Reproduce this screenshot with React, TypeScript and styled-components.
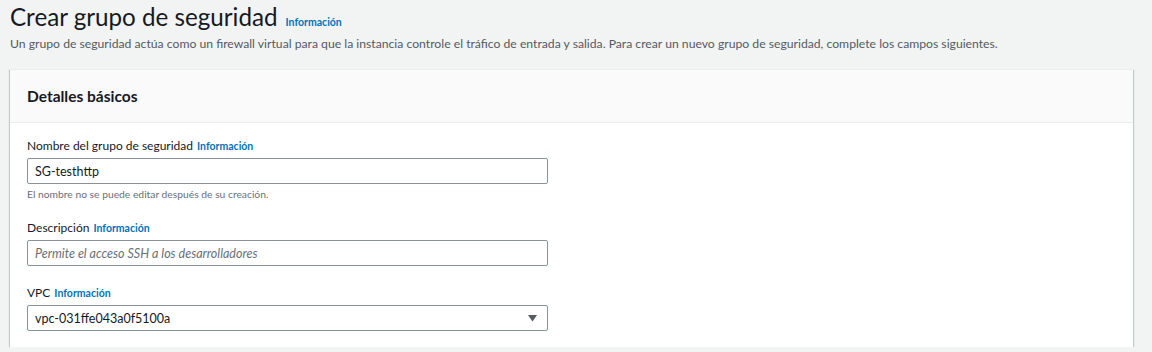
import React, { FC } from 'react'
import styled, { createGlobalStyle } from 'styled-components'

const GlobalStyle = createGlobalStyle`
  body {
    margin: 0;
    background: #f2f3f3;
    font-family: Lato, "Open Sans", "Liberation Sans", Arial, sans-serif;
    color: #16191f;
  }
`

const Page = styled.main`
  padding: 0 19px 0 10px;
`

const TitleRow = styled.div`
  display: flex;
  align-items: baseline;
  gap: 8px;
  height: 34px;
`

const Title = styled.h1`
  margin: 0;
  font-size: 24.2px;
  font-weight: 400;
  line-height: 34px;
  color: #16191f;
`

const InfoLink = styled.a`
  font-size: 10.5px;
  font-weight: 700;
  color: #0073bb;
  text-decoration: none;
`

const Intro = styled.p`
  margin: 0;
  font-size: 12.2px;
  line-height: 18px;
  color: #545b64;
  padding-top: 1px;
`

const Card = styled.section`
  margin-top: 16px;
  background: #fff;
  box-shadow: 0 1px 1px 0 rgba(0, 28, 36, 0.3), 1px 1px 1px 0 rgba(0, 28, 36, 0.15),
    -1px 1px 1px 0 rgba(0, 28, 36, 0.15);
  border-top: 1px solid #eaeded;
`

const CardHeader = styled.header`
  background: #fafafa;
  border-bottom: 1px solid #eaeded;
  height: 52px;
  display: flex;
  align-items: center;
  padding: 0 17px;
`

const CardTitle = styled.h2`
  margin: 0;
  font-size: 15.5px;
  font-weight: 700;
  color: #16191f;
`

const CardBody = styled.div`
  padding: 14px 17px 16px;
  display: flex;
  flex-direction: column;
  gap: 18px;
`

const Field = styled.div`
  display: flex;
  flex-direction: column;
  width: 521px;
`

const Label = styled.label`
  display: flex;
  align-items: baseline;
  gap: 4px;
  font-size: 12px;
  line-height: 18px;
  color: #16191f;
  margin-bottom: 3px;
`

const Input = styled.div<{ $placeholder?: boolean }>`
  height: 26px;
  box-sizing: border-box;
  border: 1px solid #879596;
  border-radius: 2px;
  padding: 0 7px;
  display: flex;
  align-items: center;
  justify-content: space-between;
  font-size: 12.5px;
  color: ${(p) => (p.$placeholder ? '#687078' : '#16191f')};
  font-style: ${(p) => (p.$placeholder ? 'italic' : 'normal')};
`

const Hint = styled.span`
  font-size: 10.3px;
  line-height: 14px;
  color: #687078;
  margin-top: 3px;
`

const Caret = styled.svg`
  width: 9px;
  height: 7px;
  fill: #545b64;
  margin-right: 3px;
`

type FieldProps = {
  label: string
  value: string
  placeholder?: boolean
  hint?: string
  select?: boolean
}

const FormField: FC<FieldProps> = ({ label, value, placeholder, hint, select }) => (
  <Field>
    <Label>
      {label} <InfoLink>Información</InfoLink>
    </Label>
    <Input $placeholder={placeholder}>
      <span>{value}</span>
      {select && (
        <Caret viewBox="0 0 9 7">
          <path d="M0 0h9L4.5 6.5z" />
        </Caret>
      )}
    </Input>
    {hint && <Hint>{hint}</Hint>}
  </Field>
)

export default function App() {
  return (
    <>
      <GlobalStyle />
      <Page>
        <TitleRow>
          <Title>Crear grupo de seguridad</Title>
          <InfoLink>Información</InfoLink>
        </TitleRow>
        <Intro>
          Un grupo de seguridad actúa como un firewall virtual para que la instancia controle el tráfico de entrada y
          salida. Para crear un nuevo grupo de seguridad, complete los campos siguientes.
        </Intro>
        <Card>
          <CardHeader>
            <CardTitle>Detalles básicos</CardTitle>
          </CardHeader>
          <CardBody>
            <FormField
              label="Nombre del grupo de seguridad"
              value="SG-testhttp"
              hint="El nombre no se puede editar después de su creación."
            />
            <FormField label="Descripción" value="Permite el acceso SSH a los desarrolladores" placeholder />
            <FormField label="VPC" value="vpc-031ffe043a0f5100a" select />
          </CardBody>
        </Card>
      </Page>
    </>
  )
}
